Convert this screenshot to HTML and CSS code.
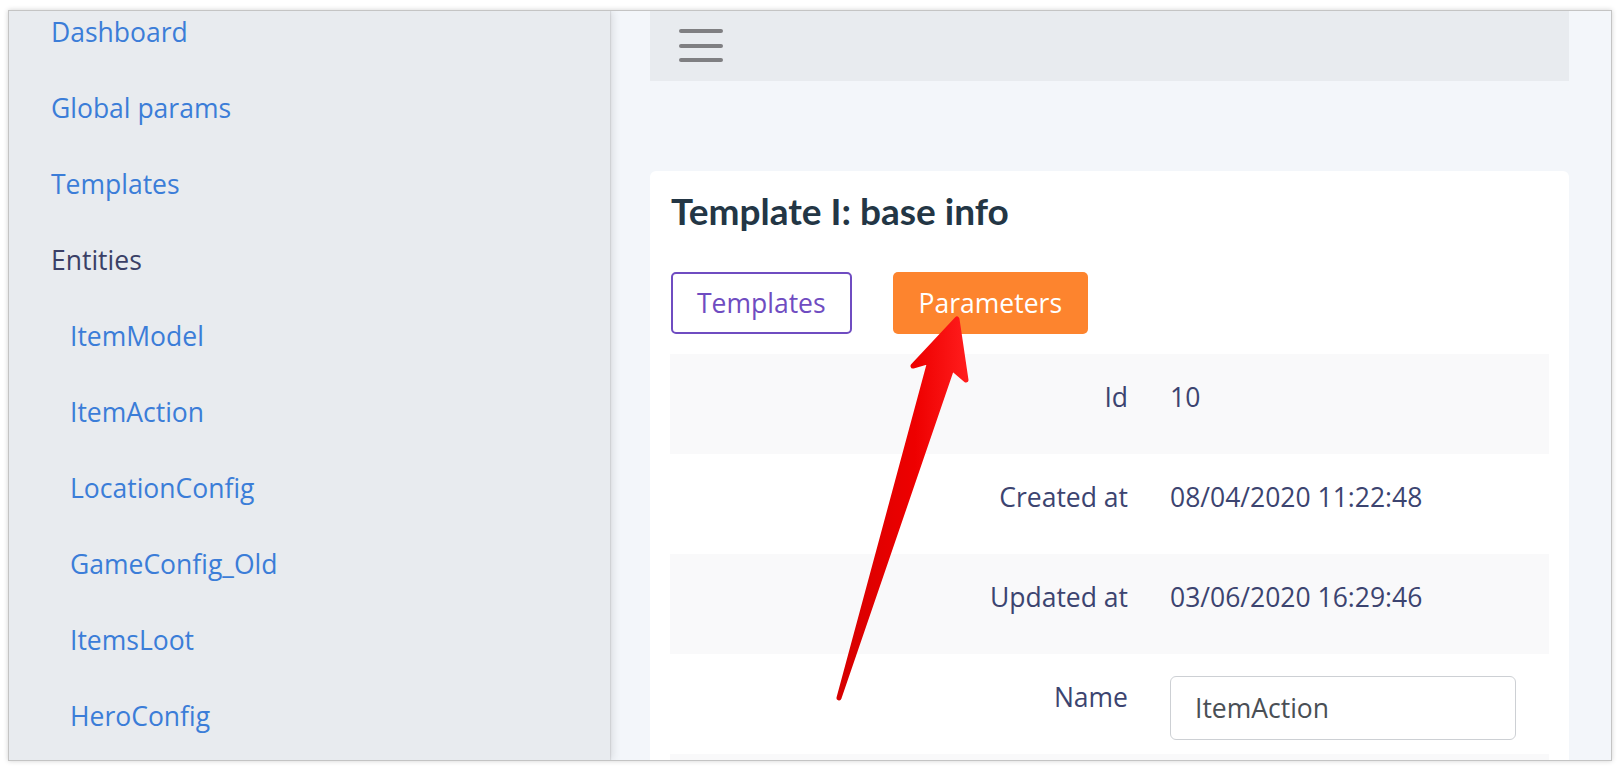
FILE: index.html
```html
<!DOCTYPE html>
<html>
<head>
<meta charset="utf-8">
<link rel="stylesheet" href="styles.css">
</head>
<body>
<div class="frame">
  <aside class="sidebar">
    <ul class="nav">
      <li class="nav-item"><a class="nav-link">Dashboard</a></li>
      <li class="nav-item"><a class="nav-link">Global params</a></li>
      <li class="nav-item"><a class="nav-link">Templates</a></li>
      <li class="nav-item"><span class="nav-title">Entities</span></li>
      <li class="nav-item sub"><a class="nav-link">ItemModel</a></li>
      <li class="nav-item sub"><a class="nav-link">ItemAction</a></li>
      <li class="nav-item sub"><a class="nav-link">LocationConfig</a></li>
      <li class="nav-item sub"><a class="nav-link">GameConfig_Old</a></li>
      <li class="nav-item sub"><a class="nav-link">ItemsLoot</a></li>
      <li class="nav-item sub"><a class="nav-link">HeroConfig</a></li>
    </ul>
  </aside>
  <main class="main">
    <header class="topbar">
      <div class="burger"><span></span><span></span><span></span></div>
    </header>
    <section class="card">
      <h1 class="card-title">Template I: base info</h1>
      <div class="actions">
        <button class="btn btn-outline">Templates</button>
        <button class="btn btn-orange">Parameters</button>
      </div>
      <div class="table">
        <div class="row"><div class="label">Id</div><div class="value">10</div></div>
        <div class="row"><div class="label">Created at</div><div class="value">08/04/2020 11:22:48</div></div>
        <div class="row"><div class="label">Updated at</div><div class="value">03/06/2020 16:29:46</div></div>
        <div class="row"><div class="label">Name</div><div class="value"><div class="input">ItemAction</div></div></div>
        <div class="row"><div class="label"></div><div class="value"></div></div>
      </div>
    </section>
  </main>
</div>
<svg class="arrow" width="1620" height="770" viewBox="0 0 1620 770">
  <defs>
    <linearGradient id="rg" x1="0" y1="0" x2="1" y2="0">
      <stop offset="0" stop-color="#d60000"/>
      <stop offset="0.6" stop-color="#ee0000"/>
      <stop offset="1" stop-color="#ff1c1c"/>
    </linearGradient>
  </defs>
  <polygon points="957,319 966,380 952,368 839,698 930,361 913,366" fill="url(#rg)" stroke="url(#rg)" stroke-width="5" stroke-linejoin="round"/>
</svg>
</body>
</html>
```
FILE: styles.css
```css
* { box-sizing: border-box; }
html, body { margin: 0; padding: 0; }
body {
  position: relative;
  width: 1620px;
  height: 770px;
  background: #ffffff;
  font-family: "Open Sans", "Noto Sans", sans-serif;
  overflow: hidden;
}
.frame {
  margin: 10px 0 0 8px;
  width: 1604px;
  height: 751px;
  border: 1px solid #c4c4c4;
  box-shadow: 0 0 5px rgba(0,0,0,0.18);
  display: flex;
  overflow: hidden;
}
.sidebar {
  width: 601px;
  flex: none;
  background: #e8ebef;
  position: relative;
  z-index: 1;
  box-shadow: 3px 0 8px rgba(0,0,0,0.10), 1px 0 1px rgba(0,0,0,0.08);
}
.nav {
  list-style: none;
  margin: -17px 0 0 0;
  padding: 0 0 0 42px;
}
.nav-item {
  height: 76px;
  line-height: 76px;
  font-size: 26.5px;
}
.nav-item.sub { padding-left: 19px; }
.nav-link { color: #3b7dd8; }
.nav-title { color: #3a3f66; }
.main {
  flex: 1;
  background: #f3f6fa;
  padding: 0 42px 0 40px;
}
.topbar {
  height: 70px;
  background: #e8ebef;
  padding: 18px 0 0 29px;
}
.burger { width: 44px; display: flex; flex-direction: column; gap: 10.5px; }
.burger span { display: block; height: 4px; border-radius: 2px; background: #7f7f82; }
.card {
  margin-top: 90px;
  background: #ffffff;
  border-radius: 6px;
  padding: 20px 20px 0 20px;
  height: 700px;
}
.card-title {
  margin: 0;
  font-family: "Lato", sans-serif;
  font-weight: 700;
  font-size: 37px;
  line-height: 40px;
  color: #233645;
  padding-left: 1px;
}
.actions {
  margin-top: 41px;
  display: flex;
  gap: 41px;
  padding-left: 1px;
}
.btn {
  height: 62px;
  border-radius: 5px;
  font-family: "Open Sans", sans-serif;
  font-size: 26.5px;
  display: inline-flex;
  align-items: center;
  cursor: pointer;
}
.btn-outline {
  background: #ffffff;
  border: 2px solid #6f4cc1;
  color: #6f4cc1;
  padding: 0 24px;
}
.btn-orange {
  background: #fd842e;
  border: none;
  color: #ffffff;
  padding: 0 26px;
}
.table { margin-top: 20px; }
.row {
  display: grid;
  grid-template-columns: 458px 1fr;
  column-gap: 42px;
  height: 100px;
  padding-top: 22px;
  font-size: 26.5px;
  line-height: 40px;
  color: #3c4470;
}
.row:nth-child(odd) { background: #f9f9fa; }
.label { text-align: right; padding-top: 1px; }
.value { padding-top: 1px; }
.input {
  margin-top: -1px;
  width: 346px;
  height: 64px;
  border: 1px solid #cdd0d4;
  border-radius: 6px;
  padding: 11px 0 0 24px;
  color: #4a4f55;
  background: #fff;
}
.arrow {
  position: absolute;
  left: 0;
  top: 0;
  pointer-events: none;
}
```
